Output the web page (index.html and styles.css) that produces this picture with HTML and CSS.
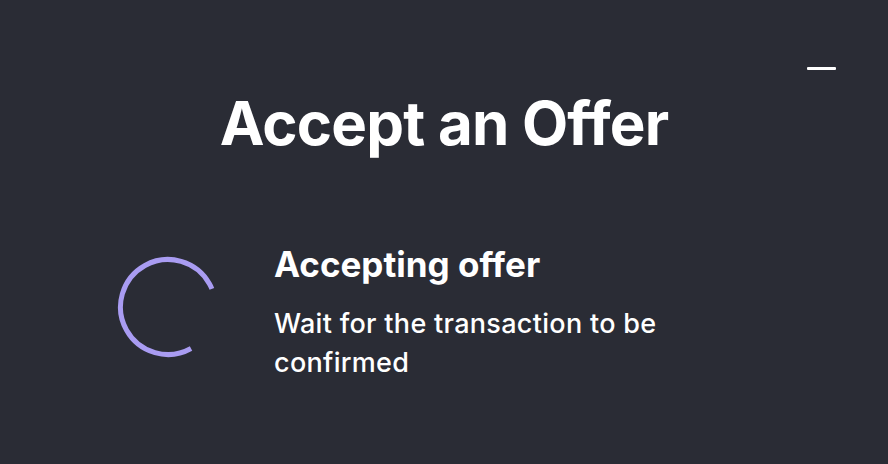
FILE: index.html
```html
<!DOCTYPE html>
<html lang="en">
<head>
    <meta charset="UTF-8">
    <meta name="viewport" content="width=device-width, initial-scale=1.0">
    <title>Accept an Offer</title>
    <link rel="stylesheet" href="styles.css">
</head>
<body>
    <div class="modal">
        <button class="close-btn" aria-label="Minimize"><span class="bar"></span></button>
        <h1 class="title">Accept an Offer</h1>

        <div class="step">
            <svg class="spinner" width="102" height="102" viewBox="0 0 102 102">
                <circle cx="51" cy="51" r="47.5" fill="none" stroke="#a99cf2" stroke-width="5"
                        stroke-dasharray="229 70" transform="rotate(61 51 51)"/>
            </svg>
            <div class="step-text">
                <h2 class="step-title">Accepting offer</h2>
                <p class="step-desc">Wait for the transaction to be confirmed</p>
            </div>
        </div>
    </div>
</body>
</html>
```

FILE: styles.css
```css
html, body {
    margin: 0;
    height: 100%;
    background: #2a2c35;
}
body {
    font-family: Inter, "Noto Sans", sans-serif;
    color: #fff;
}
.modal {
    position: relative;
    padding: 80px 40px 0;
}
.close-btn {
    position: absolute;
    top: 56px;
    right: 51px;
    width: 32px;
    height: 24px;
    padding: 0;
    border: 0;
    background: none;
    cursor: pointer;
    display: flex;
    align-items: center;
    justify-content: center;
}
.close-btn .bar {
    display: block;
    width: 29px;
    height: 3px;
    border-radius: 1px;
    background: #fff;
}
.title {
    margin: 0;
    text-align: center;
    font-size: 60px;
    font-weight: 700;
    letter-spacing: -0.8px;
    line-height: 86px;
}
.step {
    display: flex;
    align-items: center;
    gap: 55px;
    margin: 77px 0 0 77px;
}
.spinner {
    flex: none;
    margin-bottom: 11px;
}
.step-text {
    width: 420px;
}
.step-title {
    margin: 0 0 19px;
    font-size: 35px;
    font-weight: 700;
    line-height: 42px;
}
.step-desc {
    margin: 0;
    font-size: 27px;
    font-weight: 500;
    letter-spacing: 0.3px;
    line-height: 39px;
}
```
